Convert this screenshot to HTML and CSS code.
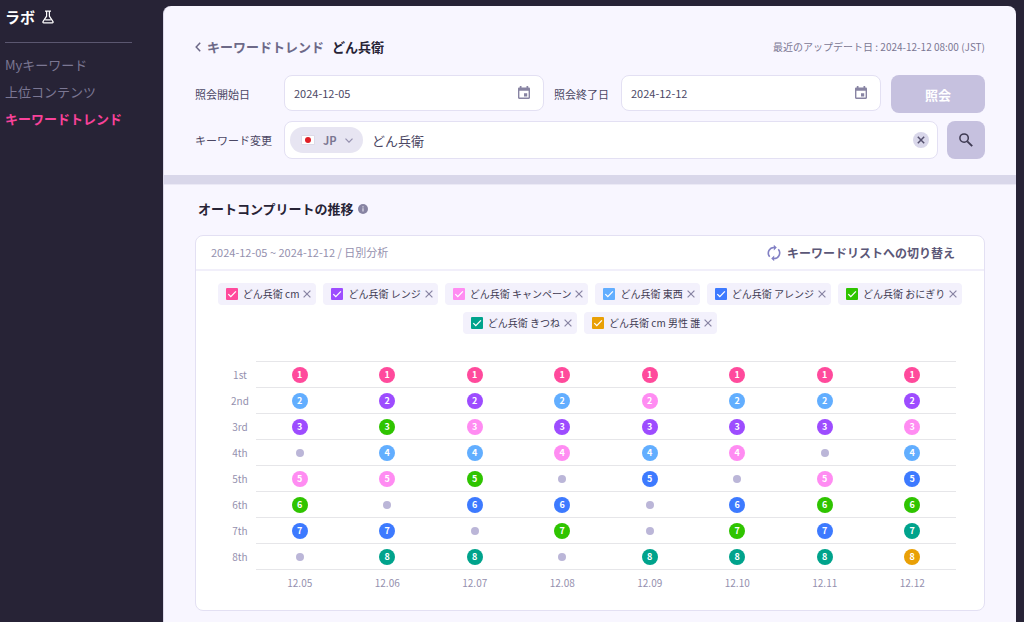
FILE: index.html
```
<!DOCTYPE html>
<html lang="ja">
<head>
<meta charset="utf-8">
<meta name="viewport" content="width=device-width, initial-scale=1">
<title>キーワードトレンド</title>
<link rel="stylesheet" href="styles.css">
</head>
<body>
<svg class="defs" aria-hidden="true">
  <symbol id="i-check" viewBox="0 0 12 12"><path d="M2.3 6.1 4.8 8.6 9.9 3.4" fill="none" stroke="#fff" stroke-width="1.3"/></symbol>
  <symbol id="i-close" viewBox="0 0 8 8"><path d="M.6.6 7.4 7.4M7.4.6.6 7.4" fill="none" stroke="currentColor" stroke-width="1.200"/></symbol>
  <symbol id="i-cal" viewBox="0 0 12 14"><path fill="currentColor" fill-rule="evenodd" d="M1.800 0h1.700v1.500h5V0h1.700v1.500h.5C11.500 1.500 12 2 12 2.800v9c0 .7-.5 1.200-1.300 1.200H1.300C.5 13 0 12.500 0 11.800v-9C0 2 .5 1.500 1.300 1.500h.5zM1.400 4.800v6.800h9.200V4.800zM6 7.200h3.200v3.200H6z"/></symbol>
</svg>
<div class="app">
  <aside class="sidebar">
    <h1 class="brand">ラボ
      <svg width="12" height="14" viewBox="0 0 12 14" fill="none" stroke="#fff" stroke-width="1.200"><path d="M3 1.200h6M4.600 1.200v5L1 11.600c-.4.7 0 1.200.7 1.200h8.600c.7 0 1.100-.5.7-1.200L7.400 6.200v-5M3.200 9.800h5.600"/></svg>
    </h1>
    <nav class="nav">
      <a href="#">Myキーワード</a>
      <a href="#">上位コンテンツ</a>
      <a href="#" class="active" aria-current="page">キーワードトレンド</a>
    </nav>
  </aside>
  <main class="panel">
    <section class="query">
      <div class="crumbs">
        <a href="#" class="back"><svg width="6" height="10" viewBox="0 0 6 10" fill="none" stroke="currentColor" stroke-width="1.500"><path d="M5.200.8 1.200 5l4 4.200"/></svg>キーワードトレンド</a>
        <h2 class="keyword">どん兵衛</h2>
        <p class="updated">最近のアップデート日 : 2024-12-12 08:00 (JST)</p>
      </div>
      <form class="form">
        <div class="row dates">
          <label class="lead" for="from">照会開始日</label>
          <div class="field date"><input id="from" type="text" value="2024-12-05"><button type="button" class="plain" aria-label="開始日を選択"><svg width="12" height="14"><use href="#i-cal"/></svg></button></div>
          <label for="to">照会終了日</label>
          <div class="field date"><input id="to" type="text" value="2024-12-12"><button type="button" class="plain" aria-label="終了日を選択"><svg width="12" height="14"><use href="#i-cal"/></svg></button></div>
          <button type="button" class="submit">照会</button>
        </div>
        <div class="row">
          <label class="lead" for="kw">キーワード変更</label>
          <div class="field search">
            <div class="country">
              <svg width="14" height="10" viewBox="0 0 14 10"><path d="M.5.5h13v9H.5z" fill="#fff" stroke="#dddbe8"/><circle cx="7" cy="5" r="3" fill="#e01e25"/></svg>
              <select aria-label="国"><option>JP</option></select>
              <svg width="8" height="5" viewBox="0 0 8 5" fill="none" stroke="#9490ae" stroke-width="1.200"><path d="M.5.6 4 4.200 7.500.6"/></svg>
            </div>
            <input id="kw" type="text" value="どん兵衛">
            <button type="button" class="clear" aria-label="消去"><svg width="8" height="8" stroke-width="1.500"><path d="M.8.8 7.200 7.200M7.200.8.8 7.200" stroke="currentColor"/></svg></button>
          </div>
          <button type="button" class="find" aria-label="検索"><svg width="14" height="14" viewBox="0 0 14 14" fill="none" stroke="currentColor"><circle cx="5.100" cy="5.100" r="4.200" stroke-width="1.500"/><path d="m8.300 8.300 4.900 4.900" stroke-width="1.900"/></svg></button>
        </div>
      </form>
    </section>
    <section class="trend">
      <h3 class="heading">オートコンプリートの推移
        <svg width="10" height="10" viewBox="0 0 10 10"><circle cx="5" cy="5" r="5" fill="#8884a3"/><path d="M5 4.300v3.200M5 2.300v1.200" stroke="#dfddeb" stroke-width="1.200"/></svg>
      </h3>
      <div class="card">
        <header class="card-head">
          <p>2024-12-05 ~ 2024-12-12 / 日別分析</p>
          <button type="button" class="toggle"><svg width="14" height="16" viewBox="0 0 14 16" fill="none" stroke="#8280c4" stroke-width="1.600"><path d="M7.500 2.500A5.600 5.600 0 0 0 2.700 11.700M6.500 13.500A5.600 5.600 0 0 0 11.300 4.300"/><path d="M6.800-.2 9.800 2.600 6.800 5.400zM7.200 10.600 4.200 13.400 7.200 16.200z" fill="#8280c4" stroke="none"/></svg>キーワードリストへの切り替え</button>
        </header>
        <div class="tags">
          <div class="tag"><label><span class="box"><input type="checkbox" class="rose" checked><svg width="12" height="12"><use href="#i-check"/></svg></span>どん兵衛 cm</label><button type="button" class="plain" aria-label="削除"><svg width="8" height="8"><use href="#i-close"/></svg></button></div>
          <div class="tag"><label><span class="box"><input type="checkbox" class="purple" checked><svg width="12" height="12"><use href="#i-check"/></svg></span>どん兵衛 レンジ</label><button type="button" class="plain" aria-label="削除"><svg width="8" height="8"><use href="#i-close"/></svg></button></div>
          <div class="tag"><label><span class="box"><input type="checkbox" class="pink" checked><svg width="12" height="12"><use href="#i-check"/></svg></span>どん兵衛 キャンペーン</label><button type="button" class="plain" aria-label="削除"><svg width="8" height="8"><use href="#i-close"/></svg></button></div>
          <div class="tag"><label><span class="box"><input type="checkbox" class="sky" checked><svg width="12" height="12"><use href="#i-check"/></svg></span>どん兵衛 東西</label><button type="button" class="plain" aria-label="削除"><svg width="8" height="8"><use href="#i-close"/></svg></button></div>
          <div class="tag"><label><span class="box"><input type="checkbox" class="blue" checked><svg width="12" height="12"><use href="#i-check"/></svg></span>どん兵衛 アレンジ</label><button type="button" class="plain" aria-label="削除"><svg width="8" height="8"><use href="#i-close"/></svg></button></div>
          <div class="tag"><label><span class="box"><input type="checkbox" class="green" checked><svg width="12" height="12"><use href="#i-check"/></svg></span>どん兵衛 おにぎり</label><button type="button" class="plain" aria-label="削除"><svg width="8" height="8"><use href="#i-close"/></svg></button></div>
          <div class="tag"><label><span class="box"><input type="checkbox" class="teal" checked><svg width="12" height="12"><use href="#i-check"/></svg></span>どん兵衛 きつね</label><button type="button" class="plain" aria-label="削除"><svg width="8" height="8"><use href="#i-close"/></svg></button></div>
          <div class="tag"><label><span class="box"><input type="checkbox" class="amber" checked><svg width="12" height="12"><use href="#i-check"/></svg></span>どん兵衛 cm 男性 誰</label><button type="button" class="plain" aria-label="削除"><svg width="8" height="8"><use href="#i-close"/></svg></button></div>
        </div>
        <table class="ranks">
          <tbody>
            <tr><th scope="row">1st</th><td><b class="rose">1</b></td><td><b class="rose">1</b></td><td><b class="rose">1</b></td><td><b class="rose">1</b></td><td><b class="rose">1</b></td><td><b class="rose">1</b></td><td><b class="rose">1</b></td><td><b class="rose">1</b></td></tr>
            <tr><th scope="row">2nd</th><td><b class="sky">2</b></td><td><b class="purple">2</b></td><td><b class="purple">2</b></td><td><b class="sky">2</b></td><td><b class="pink">2</b></td><td><b class="sky">2</b></td><td><b class="sky">2</b></td><td><b class="purple">2</b></td></tr>
            <tr><th scope="row">3rd</th><td><b class="purple">3</b></td><td><b class="green">3</b></td><td><b class="pink">3</b></td><td><b class="purple">3</b></td><td><b class="purple">3</b></td><td><b class="purple">3</b></td><td><b class="purple">3</b></td><td><b class="pink">3</b></td></tr>
            <tr><th scope="row">4th</th><td><i></i></td><td><b class="sky">4</b></td><td><b class="sky">4</b></td><td><b class="pink">4</b></td><td><b class="sky">4</b></td><td><b class="pink">4</b></td><td><i></i></td><td><b class="sky">4</b></td></tr>
            <tr><th scope="row">5th</th><td><b class="pink">5</b></td><td><b class="pink">5</b></td><td><b class="green">5</b></td><td><i></i></td><td><b class="blue">5</b></td><td><i></i></td><td><b class="pink">5</b></td><td><b class="blue">5</b></td></tr>
            <tr><th scope="row">6th</th><td><b class="green">6</b></td><td><i></i></td><td><b class="blue">6</b></td><td><b class="blue">6</b></td><td><i></i></td><td><b class="blue">6</b></td><td><b class="green">6</b></td><td><b class="green">6</b></td></tr>
            <tr><th scope="row">7th</th><td><b class="blue">7</b></td><td><b class="blue">7</b></td><td><i></i></td><td><b class="green">7</b></td><td><i></i></td><td><b class="green">7</b></td><td><b class="blue">7</b></td><td><b class="teal">7</b></td></tr>
            <tr><th scope="row">8th</th><td><i></i></td><td><b class="teal">8</b></td><td><b class="teal">8</b></td><td><i></i></td><td><b class="teal">8</b></td><td><b class="teal">8</b></td><td><b class="teal">8</b></td><td><b class="amber">8</b></td></tr>
          </tbody>
          <tfoot>
            <tr><td></td><th scope="col">12.05</th><th scope="col">12.06</th><th scope="col">12.07</th><th scope="col">12.08</th><th scope="col">12.09</th><th scope="col">12.10</th><th scope="col">12.11</th><th scope="col">12.12</th></tr>
          </tfoot>
        </table>
      </div>
    </section>
  </main>
</div>
</body>
</html>
```
FILE: styles.css
```
* { box-sizing: border-box; }
body, h1, h2, h3, p { margin: 0; }
body, input, select, button {
  font-family: "Noto Sans CJK JP", "Noto Sans", sans-serif;
  font-size: 11px;
  color: #4b4764;
}
body { background: #272336; line-height: 16px; }
svg { display: block; flex: none; }
a { text-decoration: none; }
input, select, button { border: 0; padding: 0; background: none; outline: 0; }
button { cursor: pointer; }
input { min-width: 0; }
.defs { position: absolute; width: 0; height: 0; }

.app { display: flex; min-height: 100vh; padding-right: 8px; }
.sidebar { width: 163px; flex: none; padding: 6px 31px 0 5px; }
.brand {
  display: flex; align-items: center; gap: 7px;
  padding-bottom: 15px; border-bottom: 1px solid #5b5770;
  font-size: 15px; line-height: 21px; color: #fff;
}
.nav { display: flex; flex-direction: column; gap: 7px; padding-top: 12px; font-size: 13px; line-height: 20px; }
.nav a { color: #7b7793; white-space: nowrap; }
.nav .active { color: #f8429a; font-weight: 700; }

.panel {
  flex: 1; min-width: 0; margin-top: 6px;
  border-left: 1px solid #dcd9ea; border-radius: 8px 8px 0 0;
  background: #f8f6ff;
}
.query { padding: 31px 31px 16px; border-bottom: 9px solid #d9d7ea; }
.crumbs { display: flex; align-items: center; gap: 8px; font-size: 13px; line-height: 20px; }
.back { display: flex; align-items: center; gap: 6px; color: #6d6988; font-weight: 700; }
.keyword { font-size: 13px; font-weight: 700; color: #272336; }
.updated { margin-left: auto; font-size: 10px; color: #7b7793; }
.form { display: flex; flex-direction: column; gap: 8px; padding-top: 18px; }
.row { display: flex; align-items: center; gap: 9px; }
.row label { flex: none; width: 57px; line-height: 38px; }
.row .lead { width: 80px; }
.dates { align-items: flex-start; gap: 10px; }
.dates .lead { width: 79px; }
.field {
  display: flex; flex: 1; align-items: center; min-width: 0; height: 36px;
  border: 1px solid #e3e0f3; border-radius: 8px; background: #fff;
}
.field input { flex: 1; }
.date { padding: 0 13px 0 9px; }
.plain { color: #8884a3; }
.submit, .find { height: 38px; border-radius: 8px; background: #c6c1df; }
.submit { width: 94px; color: #fff; font-size: 13px; font-weight: 700; }
.search { height: 38px; padding: 0 8px 0 5px; gap: 9px; }
.search > input { font-size: 13px; }
.country {
  display: flex; align-items: center; justify-content: space-between;
  width: 73px; height: 26px; padding: 0 10px 0 11px;
  border-radius: 13px; background: #e7e5f2;
}
.country select { appearance: none; color: #7b7793; font-weight: 700; }
.clear {
  display: grid; place-items: center; width: 16px; height: 16px;
  border-radius: 50%; background: #d9d7ea; color: #55516e;
}
.find { display: grid; place-items: center; width: 38px; color: #3e3a52; }

.trend { padding: 14px 31px 11px; border-top: 1px solid #ebe9f6; }
.heading { display: flex; align-items: center; gap: 4px; padding-left: 3px; font-size: 13px; line-height: 20px; color: #272336; }
.card { margin-top: 16px; border: 1px solid #e3e0f3; border-radius: 8px; background: #fff; }
.card-head {
  display: flex; align-items: center; justify-content: space-between;
  padding: 8px 29px 8px 15px; border-bottom: 2px solid #f1effa;
  line-height: 17px; color: #9490ae;
}
.toggle { display: flex; align-items: center; gap: 6px; color: #5b5777; font-size: 12px; font-weight: 700; line-height: 17px; }
.tags { display: flex; flex-wrap: wrap; justify-content: center; gap: 7px; padding: 12px 16px 0; }
.tag {
  display: flex; align-items: center; gap: 4px; height: 22px; padding: 0 5px 0 8px;
  border-radius: 4px; background: #f3f1fc; font-size: 10px; color: #3e3a52;
}
.tag label { display: flex; align-items: center; gap: 5px; white-space: nowrap; }
.box { display: grid; }
.box > * { grid-area: 1 / 1; }
.box input { appearance: none; width: 12px; height: 12px; margin: 0; border-radius: 1px; }
.box svg { z-index: 1; pointer-events: none; }

.ranks {
  width: calc(100% - 56px); margin: 27px 28px 14px;
  table-layout: fixed; border-collapse: collapse;
  font-size: 10px; line-height: 16px; color: #9490ae; text-align: center;
}
.ranks th { padding: 0; font-weight: 400; }
.ranks tbody th { width: 32px; }
.ranks td { height: 26px; padding: 0; }
.ranks tbody td { border-bottom: 1px solid #e6e6e9; }
.ranks tbody tr:first-child td { border-top: 1px solid #e6e6e9; }
.ranks b, .ranks i { display: block; margin: 0 auto; border-radius: 50%; }
.ranks b { width: 16px; height: 16px; color: #fff; font-size: 9px; }
.ranks i { width: 8px; height: 8px; background: #bbb6d8; }

.rose { background: #ff4a9c; }
.purple { background: #9d4cff; }
.pink { background: #ff8cf2; }
.sky { background: #62aeff; }
.blue { background: #3d7aff; }
.green { background: #2fc400; }
.teal { background: #00a38c; }
.amber { background: #e9a006; }
```
